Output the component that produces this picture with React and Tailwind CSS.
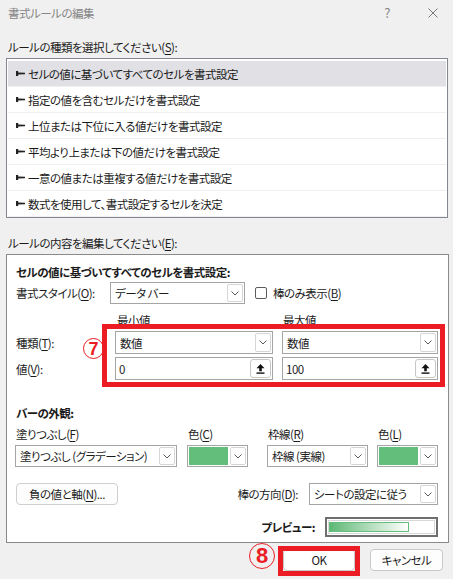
import React from "react";

const items = [
  "セルの値に基づいてすべてのセルを書式設定",
  "指定の値を含むセルだけを書式設定",
  "上位または下位に入る値だけを書式設定",
  "平均より上または下の値だけを書式設定",
  "一意の値または重複する値だけを書式設定",
  "数式を使用して、書式設定するセルを決定",
];

const Chevron = () => (
  <svg width="8" height="5" viewBox="0 0 8 5">
    <path d="M0.5 0.5 L4 4 L7.5 0.5" stroke="#5a5a5a" strokeWidth="1" fill="none" />
  </svg>
);

const ArrowBox = () => (
  <div className="w-[16px] self-stretch my-[1px] mr-[1px] border border-[#d6d6d6] rounded-[2px] bg-white flex items-center justify-center">
    <Chevron />
  </div>
);

const Select = ({ className, children }) => (
  <div className={`flex items-center border border-[#a5a5a5] bg-white ${className}`}>
    <span className="flex-1 pl-[4px] whitespace-nowrap overflow-hidden leading-[16px]">{children}</span>
    <ArrowBox />
  </div>
);

const ColorSelect = () => (
  <div className="flex items-stretch h-[22px] w-[61px] border border-[#a5a5a5] bg-white">
    <div className="w-[40px] my-[1px] ml-[1px] bg-[#63be7b]" />
    <div className="w-[3px]" />
    <ArrowBox />
  </div>
);

const Marker = () => (
  <svg width="9" height="5" viewBox="0 0 9 5">
    <polygon points="0,0 2.2,0 2.2,1.5 9,1.8 9,3.2 2.2,3.5 2.2,5 0,5" fill="#222" />
  </svg>
);

const UpButton = () => (
  <div className="w-[21px] h-[19px] mr-[1px] border border-[#c6c6c6] rounded-[3px] bg-white flex items-center justify-center">
    <svg width="9" height="10" viewBox="0 0 9 10">
      <path d="M4.5 0 L8.5 4.2 L5.8 4.2 L5.8 7.2 L3.2 7.2 L3.2 4.2 L0.5 4.2 Z" fill="#111" />
      <rect x="0.5" y="8.4" width="8" height="1.4" fill="#111" />
    </svg>
  </div>
);

const NumInput = ({ value }) => (
  <div className="flex items-center h-[23px] border border-[#a5a5a5] bg-white">
    <span className="flex-1 pl-[3px] leading-[16px]">{value}</span>
    <UpButton />
  </div>
);

export default function App() {
  return (
    <div className="relative w-[453px] h-[579px] overflow-hidden bg-[#f0f0f0] text-[11.5px] tracking-[-0.5px] text-[#1b1b1b] font-['Noto_Sans_CJK_JP',sans-serif] [font-feature-settings:'palt']">
      {/* title bar */}
      <div className="h-[25px] flex items-center pl-[8px] text-[#858585]">
        <span className="leading-[16px]">書式ルールの編集</span>
        <span className="ml-auto mr-[38px] text-[13px] leading-[16px]">?</span>
        <svg className="mr-[15px]" width="10" height="10" viewBox="0 0 10 10">
          <path d="M0.5 0.5 L9.5 9.5 M9.5 0.5 L0.5 9.5" stroke="#7a7a7a" strokeWidth="1" />
        </svg>
      </div>

      <div className="h-[33px] flex items-end pb-[3px] pl-[8px]">
        <span className="leading-[16px]">
          ルールの種類を選択してください(<u className="underline-offset-2">S</u>):
        </span>
      </div>

      {/* rule type list */}
      <div className="ml-[6px] w-[442px] h-[160px] border border-[#828790] bg-white pt-[2px] px-[1px]">
        {items.map((t, i) => (
          <div
            key={i}
            className={`h-[26px] flex items-center pl-[8px] border-b border-[#efefef] ${
              i === 0 ? "bg-[#e0e0e5]" : ""
            }`}
          >
            <Marker />
            <span className="ml-[3px] leading-[16px]">{t}</span>
          </div>
        ))}
      </div>

      <div className="h-[36px] flex items-end pb-[3px] pl-[8px]">
        <span className="leading-[16px]">
          ルールの内容を編集してください(<u className="underline-offset-2">E</u>):
        </span>
      </div>

      {/* rule editor panel */}
      <div className="ml-[6px] w-[443px] h-[289px] border border-[#8a8a8a] bg-white pt-[9px] pl-[9px] pr-[10px]">
        <div className="h-[16px] leading-[16px] font-bold">セルの値に基づいてすべてのセルを書式設定:</div>

        <div className="mt-[2px] h-[22px] flex items-center">
          <span className="w-[94px] leading-[16px]">
            書式スタイル(<u className="underline-offset-2">O</u>):
          </span>
          <Select className="w-[135px] h-[22px]">データ バー</Select>
          <div className="ml-[10px] w-[12px] h-[12px] rounded-[2px] border border-[#5c5c5c] bg-white" />
          <span className="ml-[6px] leading-[16px]">
            棒のみ表示(<u className="underline-offset-2">B</u>)
          </span>
        </div>

        <div className="mt-[8px] grid grid-cols-[90px_158px_156px] grid-rows-[16px_23px_23px] gap-x-[9px] gap-y-[3px] items-center">
          <span />
          <span className="pl-[2px] leading-[16px]">最小値</span>
          <span className="pl-[1px] leading-[16px]">最大値</span>

          <span className="leading-[16px]">
            種類(<u className="underline-offset-2">T</u>):
          </span>
          <Select className="h-[23px]">数値</Select>
          <Select className="h-[23px]">数値</Select>

          <span className="leading-[16px]">
            値(<u className="underline-offset-2">V</u>):
          </span>
          <NumInput value="0" />
          <NumInput value="100" />
        </div>

        <div className="mt-[25px] h-[16px] leading-[16px] font-bold">バーの外観:</div>

        <div className="mt-[5px] -ml-[1px] flex">
          <div className="w-[162px] flex flex-col">
            <span className="pl-[1px] h-[16px] leading-[16px]">
              塗りつぶし(<u className="underline-offset-2">F</u>)
            </span>
            <Select className="mt-[3px] h-[22px]">塗りつぶし (グラデーション)</Select>
          </div>
          <div className="ml-[10px] w-[61px] flex flex-col">
            <span className="pl-[1px] h-[16px] leading-[16px]">
              色(<u className="underline-offset-2">C</u>)
            </span>
            <div className="mt-[3px]">
              <ColorSelect />
            </div>
          </div>
          <div className="ml-[19px] w-[101px] flex flex-col">
            <span className="pl-[1px] h-[16px] leading-[16px]">
              枠線(<u className="underline-offset-2">R</u>)
            </span>
            <Select className="mt-[3px] h-[22px]">枠線 (実線)</Select>
          </div>
          <div className="ml-[9px] w-[61px] flex flex-col">
            <span className="pl-[1px] h-[16px] leading-[16px]">
              色(<u className="underline-offset-2">L</u>)
            </span>
            <div className="mt-[3px]">
              <ColorSelect />
            </div>
          </div>
        </div>

        <div className="mt-[16px] h-[22px] flex items-center">
          <button className="w-[102px] h-[22px] rounded-[4px] border border-[#cfcfcf] bg-[#fdfdfd] leading-[16px]">
            負の値と軸(<u className="underline-offset-2">N</u>)...
          </button>
          <span className="ml-auto mr-[11px] leading-[16px]">
            棒の方向(<u className="underline-offset-2">D</u>):
          </span>
          <Select className="w-[129px] h-[22px]">シートの設定に従う</Select>
        </div>

        <div className="mt-[12px] h-[20px] flex items-center justify-end">
          <span className="mr-[10px] leading-[16px] font-bold">プレビュー:</span>
          <div className="w-[113px] h-[20px] border-2 border-[#6e6e6e] p-[1px]">
            <div className="h-full border border-[#d8d8d8] flex items-center">
              <div className="w-[80px] h-[10px] border border-[#63be7b] bg-linear-to-r from-[#5cb877] to-white" />
            </div>
          </div>
        </div>
      </div>

      {/* dialog buttons */}
      <div className="mt-[6px] h-[22px] flex justify-end pr-[10px]">
        <button className="w-[72px] h-[22px] border border-[#c8c8c8] rounded-[4px] bg-white leading-[16px]">OK</button>
        <button className="ml-[15px] w-[73px] h-[22px] border border-[#c8c8c8] rounded-[4px] bg-[#fdfdfd] leading-[16px]">
          キャンセル
        </button>
      </div>

      {/* red annotations */}
      <div className="absolute left-[102px] top-[324px] w-[343px] h-[63px] border-[5px] border-[#ec1c24]" />
      <div className="absolute left-[83px] top-[338px] w-[21px] h-[21px] rounded-full border-[1.5px] border-[#ec1c24] flex items-center justify-center text-[#ec1c24] font-bold text-[18px] leading-none tracking-normal font-['Liberation_Sans',sans-serif]">
        7
      </div>
      <div className="absolute left-[249px] top-[543px] w-[26px] h-[26px] rounded-full border-[1.5px] border-[#ec1c24] flex items-center justify-center text-[#ec1c24] font-bold text-[22px] leading-none tracking-normal font-['Liberation_Sans',sans-serif]">
        8
      </div>
      <div className="absolute left-[278px] top-[546px] w-[82px] h-[30px] border-[5px] border-[#ec1c24]" />
    </div>
  );
}
